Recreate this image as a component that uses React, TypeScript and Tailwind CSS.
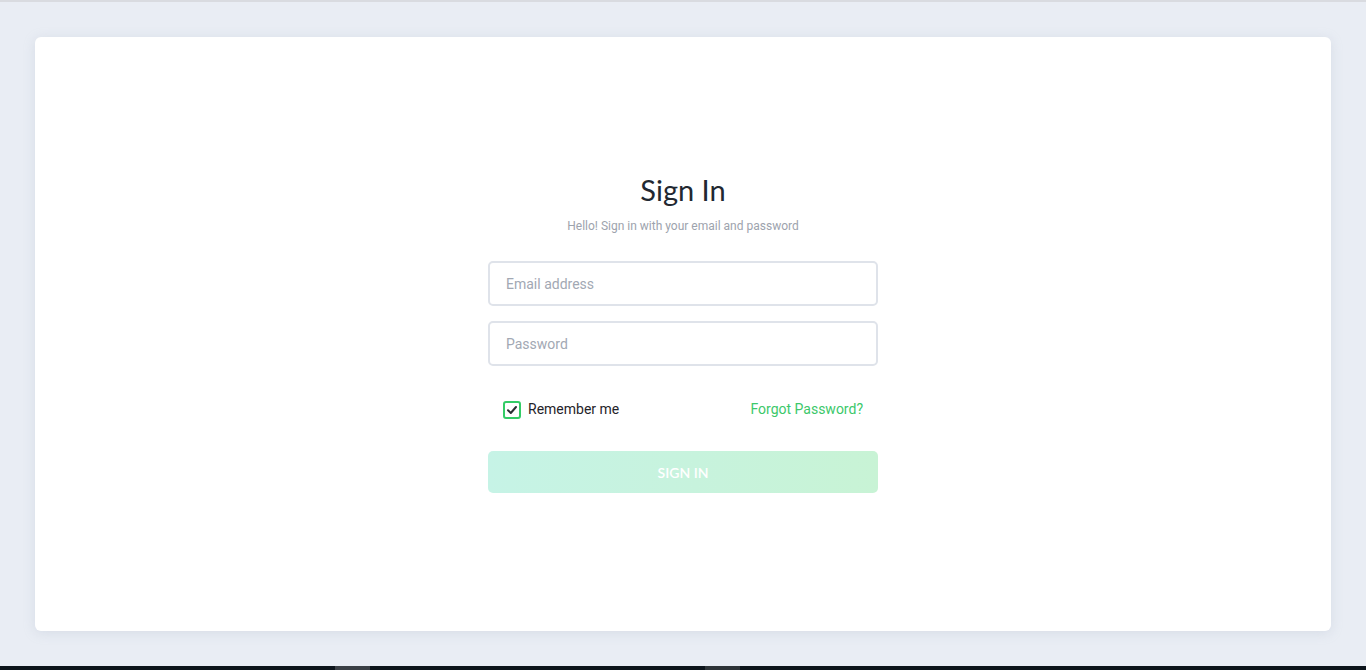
export default function App() {
  return (
    <div className="flex h-[670px] w-full flex-col bg-[#e9edf4] font-['Roboto',sans-serif]">
      <div className="h-[2px] w-full shrink-0 bg-[#d9dbe0]" />
      <div className="flex flex-1 px-[35px] py-[35px]">
        <div className="flex flex-1 items-center justify-center rounded-[6px] bg-white shadow-[0_2px_12px_rgba(160,170,190,0.25)]">
          <div className="flex w-[390px] flex-col">
            <h1 className="text-center font-['Lato',sans-serif] text-[29px] font-normal leading-[30px] text-[#222831]">
              Sign In
            </h1>
            <p className="mt-[14px] text-center text-[12px] leading-[14px] text-[#9da3ad]">
              Hello! Sign in with your email and password
            </p>
            <input
              type="email"
              placeholder="Email address"
              className="mt-[28px] h-[45px] w-full rounded-[5px] border-2 border-[#dfe3ea] px-[16px] text-[14px] text-[#333] outline-none placeholder:text-[#a2a8b3]"
            />
            <input
              type="password"
              placeholder="Password"
              className="mt-[15px] h-[45px] w-full rounded-[5px] border-2 border-[#dfe3ea] px-[16px] text-[14px] text-[#333] outline-none placeholder:text-[#a2a8b3]"
            />
            <div className="mt-[33px] flex h-[21px] items-center justify-between px-[15px]">
              <label className="flex items-center gap-[7px] text-[14px] text-[#1f2329]">
                <span className="flex h-[18px] w-[18px] items-center justify-center rounded-[3px] border-2 border-[#33cc66]">
                  <svg width="12" height="12" viewBox="0 0 12 12" fill="none">
                    <path d="M2 6.2 L4.8 9 L10 3" stroke="#2b2f33" strokeWidth="2" strokeLinecap="round" strokeLinejoin="round" />
                  </svg>
                </span>
                Remember me
              </label>
              <a className="text-[14px] text-[#3cc86a]">Forgot Password?</a>
            </div>
            <button className="mt-[31px] h-[42px] w-full rounded-[5px] bg-gradient-to-r from-[#c6f3e6] to-[#c8f3d5] font-['Lato',sans-serif] text-[14px] font-semibold text-white">
              SIGN IN
            </button>
          </div>
        </div>
      </div>
      <div className="flex h-[4px] w-full shrink-0 bg-[#0c141b]">
        <div className="ml-[335px] h-full w-[35px] bg-[#3a3f45]" />
        <div className="ml-[335px] h-full w-[35px] bg-[#2d3338]" />
      </div>
    </div>
  );
}
